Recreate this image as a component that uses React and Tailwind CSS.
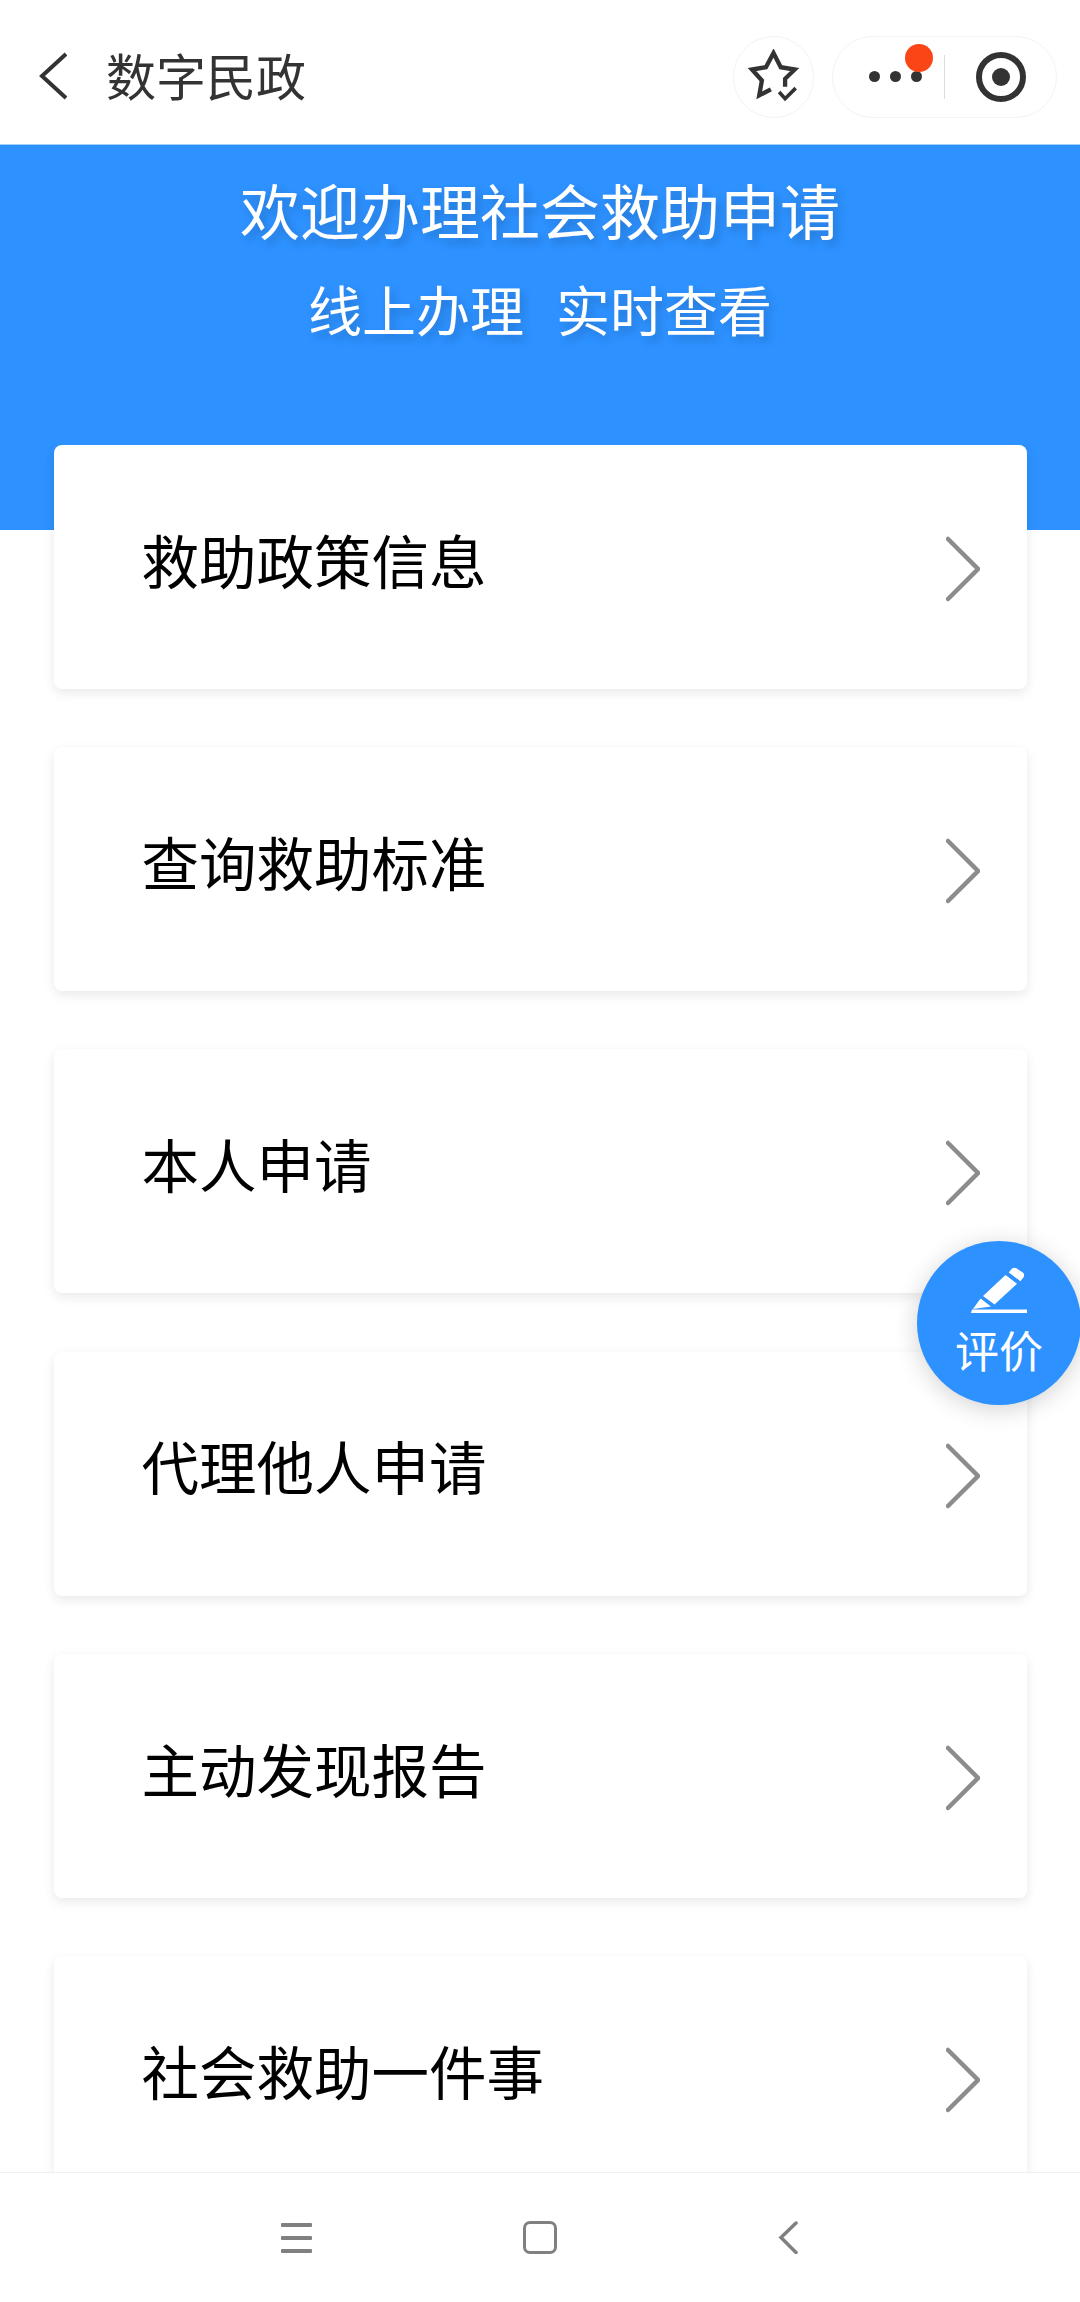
const items = [
  "救助政策信息",
  "查询救助标准",
  "本人申请",
  "代理他人申请",
  "主动发现报告",
  "社会救助一件事",
];

const fontFamily = "font-['Noto_Sans_CJK_SC','Noto_Sans',sans-serif]";

const TopBar = () => (
  <header className="h-[144px] shrink-0 bg-white flex items-center relative">
    <svg className="ml-[38px] mt-[8px] w-[30px] h-[48px]" viewBox="0 0 30 48" fill="none" stroke="#333" strokeWidth="4">
      <path d="M28 2 4 24l24 22" />
    </svg>
    <span className="ml-[38px] mt-[4px] text-[50px] leading-none text-[#333]">数字民政</span>
    <div className="ml-auto mr-[23px] mt-[9px] flex items-center gap-[18px]">
      <div className="w-[81px] h-[82px] rounded-full border border-[#f3f3f3] flex items-center justify-center">
        <svg className="w-[55px] h-[55px]" viewBox="60 60 166 166" fill="none" stroke="#333" strokeWidth="13" strokeLinejoin="miter">
          <path d="M178 174 178 150 207 122 165 115 143 72 120 115 78 122 108 155 100 200 135 182" />
          <path d="M160 190 178 210 210 178" strokeWidth="11" />
        </svg>
      </div>
      <div className="w-[225px] h-[82px] rounded-[41px] border border-[#f3f3f3] flex items-center relative">
        <div className="ml-[36px] flex items-center gap-[10px]">
          <span className="w-[11px] h-[11px] rounded-full bg-[#333]" />
          <span className="w-[11px] h-[11px] rounded-full bg-[#333]" />
          <span className="w-[11px] h-[11px] rounded-full bg-[#333]" />
        </div>
        <span className="absolute left-[72px] top-[7px] w-[28px] h-[28px] rounded-full bg-[#fa4616]" />
        <span className="ml-[22px] w-px h-[44px] bg-[#dcdcdc]" />
        <div className="ml-[31px] w-[50px] h-[50px] rounded-full border-[6px] border-[#333] flex items-center justify-center">
          <span className="w-[18px] h-[18px] rounded-full bg-[#333]" />
        </div>
      </div>
    </div>
  </header>
);

const Hero = () => (
  <section className="h-[386px] shrink-0 bg-[#2d91ff] border-t border-[#9fd0f5] flex flex-col items-center text-white [text-shadow:4px_5px_8px_rgba(0,0,0,0.18)]">
    <h1 className="mt-[27px] text-[60px] leading-[74px] font-normal">欢迎办理社会救助申请</h1>
    <p className="mt-[26px] text-[54px] leading-[74px] whitespace-pre [word-spacing:4px]">线上办理  实时查看</p>
  </section>
);

const ServiceCard = ({ label }) => (
  <div className="h-[244px] shrink-0 bg-white rounded-[8px] shadow-[0_4px_12px_rgba(0,0,0,0.09)] flex items-center justify-between pl-[87.500px] pr-[47px]">
    <span className="mb-[15px] text-[57.500px] leading-none text-black">{label}</span>
    <svg className="mt-[4px] w-[34px] h-[66px]" viewBox="0 0 34 66" fill="none" stroke="#8c8c8c" strokeWidth="4.5" strokeLinecap="round">
      <path d="M2 3 32 33 2 63" />
    </svg>
  </div>
);

const BottomNav = () => (
  <nav className="h-[130px] shrink-0 bg-white border-t border-[#f0f0f0] flex items-start relative z-10">
    <div className="ml-[281px] mt-[50px] w-[31px] flex flex-col gap-[9px]">
      <span className="h-[4px] bg-[#808080] rounded-[1px]" />
      <span className="h-[4px] bg-[#808080] rounded-[1px]" />
      <span className="h-[4px] bg-[#808080] rounded-[1px]" />
    </div>
    <div className="ml-[211px] mt-[48px] w-[34px] h-[33px] rounded-[7px] border-[3.5px] border-[#808080]" />
    <svg className="ml-[221px] mt-[48px] w-[20px] h-[33px]" viewBox="0 0 20 33" fill="none" stroke="#808080" strokeWidth="3.5" strokeLinecap="round">
      <path d="M18 2 3 16.5l15 15" />
    </svg>
  </nav>
);

const RateButton = () => (
  <button className="absolute left-[917px] top-[1241px] w-[164px] h-[164px] rounded-full bg-[#2d91ff] shadow-[0_4px_24px_rgba(0,0,0,0.18)] flex flex-col items-center text-white z-20">
    <svg className="mt-[26px] w-[56px] h-[46px]" viewBox="0 0 56 46" fill="#fff">
      <path d="M41 1.5c1.5-1.2 3.4-1.1 4.8-.1l6 4.2c1.6 1.2 1.800 3.2.6 4.8l-3 3.8-11.600-8.800zM34.500 8 46 16.700 23.500 37.500 12 29z" />
      <path d="M9.500 31.500 20 39.500 2 42zM1 42.500h55V46H0z" />
    </svg>
    <span className="mt-[13px] text-[44px] leading-[46px]">评价</span>
  </button>
);

export default function App() {
  return (
    <div className={`${fontFamily} relative w-[1080px] h-[2302px] overflow-hidden bg-white flex flex-col`}>
      <TopBar />
      <Hero />
      <main className="flex-1 min-h-0 -mt-[85px] pl-[54px] pr-[53px] flex flex-col gap-[58.200px] overflow-hidden">
        {items.map((label) => (
          <ServiceCard key={label} label={label} />
        ))}
      </main>
      <BottomNav />
      <RateButton />
    </div>
  );
}
